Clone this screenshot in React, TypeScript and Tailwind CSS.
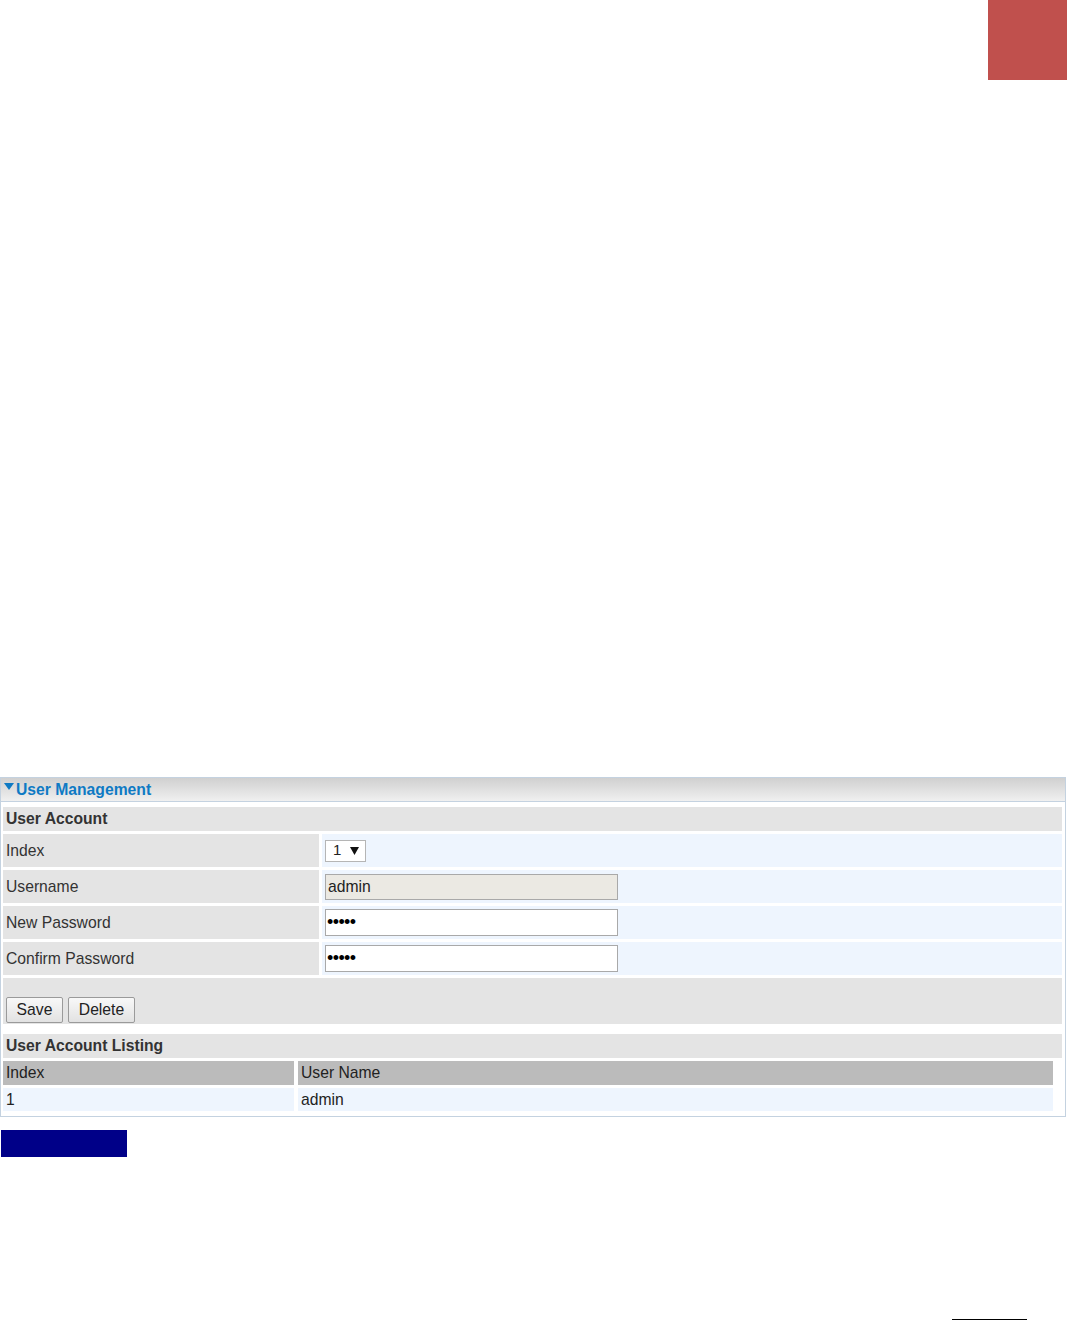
const rows = [
  { label: "Index", kind: "select" },
  { label: "Username", kind: "readonly", value: "admin" },
  { label: "New Password", kind: "password", value: "•••••" },
  { label: "Confirm Password", kind: "password", value: "•••••" },
];

export default function App() {
  return (
    <div className="flex h-[1320px] w-full flex-col bg-white font-['Liberation_Sans',Arial,sans-serif] text-[15.7px] text-[#222]">
      <div className="flex justify-end">
        <div className="h-[80px] w-[79px] bg-[#c0504d]" />
      </div>

      <section className="mt-[697px] w-[1066px] border border-[#c4d2e0]">
        <div className="flex h-[24px] items-center border-b border-[#c4d2e0] bg-gradient-to-b from-[#d0d0d0] to-[#f0f0f0] pl-[3px]">
          <svg width="10" height="7" viewBox="0 0 10 7" className="mr-[2px] -mt-[6px]">
            <path d="M0 0 H10 L5 7 Z" fill="#0e7ac4" />
          </svg>
          <span className="font-bold text-[#0e7ac4]">User Management</span>
        </div>

        <div className="flex flex-col gap-[3px] pt-[5px] pb-[5px] pl-[2px] pr-[3px]">
          <SectionTitle>User Account</SectionTitle>

          {rows.map((row) => (
            <div key={row.label} className="flex h-[33px] gap-[3px]">
              <div className="flex w-[316px] items-center bg-[#e4e4e4] pl-[3px] text-[#333]">
                {row.label}
              </div>
              <div className="flex flex-1 items-center bg-[#eef5fe] pl-[3px]">
                {row.kind === "select" && (
                  <div className="flex h-[22px] w-[41px] items-center border border-[#b5b5b5] bg-white pl-[7px] text-[15px]">
                    <span>1</span>
                    <svg width="9" height="9" viewBox="0 0 9 9" className="ml-[9px]">
                      <path d="M0 1 H9 L4.5 9 Z" fill="#111" />
                    </svg>
                  </div>
                )}
                {row.kind === "readonly" && (
                  <div className="flex h-[26px] w-[293px] items-center border border-[#a9a9a9] bg-[#ebe9e3] pl-[2px]">
                    {row.value}
                  </div>
                )}
                {row.kind === "password" && (
                  <div className="flex h-[27px] w-[293px] items-center border border-[#a9a9a9] bg-white pl-[1px] text-[18px] tracking-[-0.6px] text-black">
                    {row.value}
                  </div>
                )}
              </div>
            </div>
          ))}

          <div className="flex h-[46px] items-end gap-[5px] bg-[#e4e4e4] pb-[1px] pl-[3px]">
            <Button className="w-[57px]">Save</Button>
            <Button className="w-[67px]">Delete</Button>
          </div>

          <div className="mt-[7px]">
            <SectionTitle>User Account Listing</SectionTitle>
          </div>

          <div className="flex w-[1050px] flex-col gap-[3px]">
            <div className="flex h-[24px] gap-[4px]">
              <div className="flex w-[291px] items-center bg-[#bbbbbb] pl-[3px]">Index</div>
              <div className="flex flex-1 items-center bg-[#bbbbbb] pl-[3px]">User Name</div>
            </div>
            <div className="flex h-[23px] gap-[4px]">
              <div className="flex w-[291px] items-center bg-[#eef5fe] pl-[3px]">1</div>
              <div className="flex flex-1 items-center bg-[#eef5fe] pl-[3px]">admin</div>
            </div>
          </div>
        </div>
      </section>

      <div className="mt-[13px] ml-[1px] h-[27px] w-[126px] bg-[#000088]" />

      <div className="mt-auto flex justify-end pr-[40px]">
        <div className="h-px w-[75px] bg-black" />
      </div>
    </div>
  );
}

function SectionTitle({ children }: { children: React.ReactNode }) {
  return (
    <div className="flex h-[24px] items-center bg-[#e4e4e4] pl-[3px] font-bold text-[#333]">
      {children}
    </div>
  );
}

function Button({ children, className }: { children: React.ReactNode; className: string }) {
  return (
    <button
      className={
        "flex h-[26px] items-center justify-center rounded-[2px] border border-[#9a9a9a] bg-gradient-to-b from-[#f8f8f8] to-[#e2e2e2] text-[15.7px] text-[#222] " +
        className
      }
    >
      {children}
    </button>
  );
}
